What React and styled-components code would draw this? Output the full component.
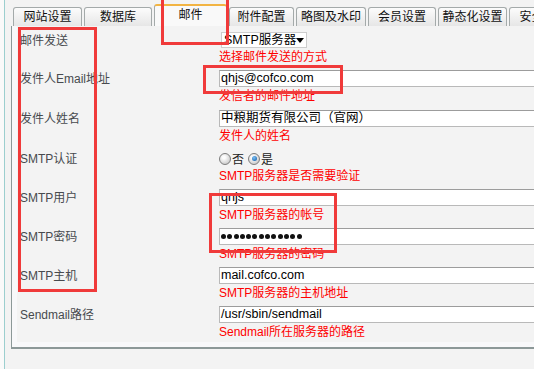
import React from 'react'
import styled, { createGlobalStyle } from 'styled-components'

const Global = createGlobalStyle`
  html, body { margin: 0; padding: 0; background: #fafafa; }
  body {
    font-family: "Liberation Sans", "Noto Sans CJK SC", sans-serif;
    font-size: 12px;
  }
`

const Page = styled.div`
  position: relative;
  width: 534px; height: 369px;
  overflow: hidden;
  padding-left: 4px;
  box-sizing: border-box;
  background: #fafafa;
`

const Frame = styled.div`
  width: 640px; height: 369px;
  border-left: 1px solid #9ccfcf;
  background: #f3f3f3;
  padding-left: 6px;
  box-sizing: border-box;
`

const TabBar = styled.div`
  display: flex;
  align-items: flex-end;
  gap: 2px;
  height: 26px;
  padding-left: 2px;
`

const Tab = styled.div`
  flex: none;
  width: ${p => p.$w}px;
  height: ${p => (p.$active ? 22 : 19)}px;
  box-sizing: border-box;
  border: 1px solid #a4aaaa;
  border-bottom: none;
  border-top: ${p => (p.$active ? '2px solid #f2b443' : '1px solid #a4aaaa')};
  border-radius: 3px 3px 0 0;
  background: ${p => (p.$active ? '#f9f9f9' : 'linear-gradient(#fcfcfc, #e6e6e6)')};
  color: #111;
  font-size: 12px;
  line-height: 18px;
  text-align: center;
  white-space: nowrap;
  overflow: hidden;
`

const Panel = styled.div`
  border-left: 1px solid #8c9898;
  border-bottom: 2px solid #8c9898;
  background: #f8f8fa;
  padding: 0 0 5px 5px;
`

const Form = styled.div`
  height: 316px;
  box-sizing: border-box;
  padding-top: 6px;
  overflow: hidden;
  background: #f3f3f3;
`

const Row = styled.div`
  display: grid;
  grid-template-columns: 202px 1fr;
  padding-bottom: ${p => (p.$loose ? 5 : 4)}px;
`

const Label = styled.div`
  padding: 1px 0 0 3px;
  line-height: 17px;
  color: #474a4e;
  white-space: nowrap;
`

const Cell = styled.div`
  display: flex;
  flex-direction: column;
  align-items: flex-start;
`

const TextBox = styled.div`
  width: 100%;
  height: 17px;
  box-sizing: border-box;
  border: 1px solid #b9b9b9;
  border-top-color: #9c9c9c;
  background: #fff;
  padding: 0 1px;
  color: #000;
  font-size: 12.5px;
  line-height: 15px;
  white-space: nowrap;
  display: flex;
  align-items: center;
`

const Dot = styled.span`
  flex: none;
  display: inline-block;
  width: 5px; height: 5px;
  border-radius: 50%;
  background: #111;
  margin-right: 1.3px;
`

const Select = styled.div`
  flex: none;
  margin-left: 2px;
  width: 86px;
  min-width: 86px;
  height: 16px;
  box-sizing: border-box;
  border: 1px solid #cdcdcd;
  background: #fff;
  display: flex;
  align-items: center;
  justify-content: space-between;
  padding: 0 4px 0 2px;
  color: #000;
  font-size: 12.5px;
  line-height: 14px;
  white-space: nowrap;
`

const Caret = styled.span`
  flex: none;
  width: 0; height: 0;
  border-left: 4px solid transparent;
  border-right: 4px solid transparent;
  border-top: 5px solid #000;
`

const Hint = styled.div`
  color: #ff0000;
  line-height: 18px;
  white-space: nowrap;
`

const RadioGroup = styled.div`
  height: 17px;
  display: flex;
  align-items: center;
  color: #222;
`

const Radio = styled.span`
  display: inline-block;
  position: relative;
  width: 12px; height: 12px;
  box-sizing: border-box;
  border-radius: 50%;
  border: 1px solid #7d7d7d;
  background: radial-gradient(circle at 40% 35%, #fdfdfd 15%, #bdbdbd 95%);
  margin: ${p => (p.$first ? '0 1px 0 0' : '0 1px 0 4px')};
  &::after {
    content: '';
    display: ${p => (p.$checked ? 'block' : 'none')};
    position: absolute;
    left: 2.5px; top: 2.5px;
    width: 5px; height: 5px;
    border-radius: 50%;
    background: radial-gradient(circle at 40% 35%, #7cc0f4, #0a56a4);
  }
`

const Mark = styled.div`
  position: absolute;
  left: ${p => p.$x}px;
  top: ${p => p.$y}px;
  width: ${p => p.$w}px;
  height: ${p => p.$h}px;
  box-sizing: border-box;
  border: 3px solid #f03a3a;
  pointer-events: none;
`

const tabs = [
  ['网站设置', 69],
  ['数据库', 68],
  ['邮件', 73, true],
  ['附件配置', 65],
  ['略图及水印', 70],
  ['会员设置', 68],
  ['静态化设置', 69],
  ['安全设置', 69],
]

const marks = [
  [161, -3, 68, 48],
  [18, 27, 79, 265],
  [203, 65, 140, 29],
  [209, 193, 128, 60],
]

const fields = [
  { label: '发件人Email地址', value: 'qhjs@cofco.com', hint: '发信者的邮件地址', loose: true },
  { label: '发件人姓名', value: '中粮期货有限公司（官网）', hint: '发件人的姓名', loose: true },
  { label: 'SMTP认证', radio: true, hint: 'SMTP服务器是否需要验证' },
  { label: 'SMTP用户', value: 'qnjs', hint: 'SMTP服务器的帐号' },
  { label: 'SMTP密码', password: 13, hint: 'SMTP服务器的密码' },
  { label: 'SMTP主机', value: 'mail.cofco.com', hint: 'SMTP服务器的主机地址' },
  { label: 'Sendmail路径', value: '/usr/sbin/sendmail', hint: 'Sendmail所在服务器的路径' },
]

function Field({ f }) {
  if (f.radio) {
    return (
      <RadioGroup>
        <Radio $first />否
        <Radio $checked />是
      </RadioGroup>
    )
  }
  if (f.password) {
    return (
      <TextBox>
        {Array.from({ length: f.password }).map((_, i) => <Dot key={i} />)}
      </TextBox>
    )
  }
  return <TextBox>{f.value}</TextBox>
}

export default function App() {
  return (
    <Page>
      <Global />
      <Frame>
        <TabBar>
          {tabs.map(([t, w, a]) => (
            <Tab key={t} $w={w} $active={a}>{t}</Tab>
          ))}
        </TabBar>
        <Panel>
          <Form>
            <Row>
              <Label>邮件发送</Label>
              <Cell>
                <Select>SMTP服务器<Caret /></Select>
                <Hint>选择邮件发送的方式</Hint>
              </Cell>
            </Row>
            {fields.map(f => (
              <Row key={f.label} $loose={f.loose}>
                <Label>{f.label}</Label>
                <Cell>
                  <Field f={f} />
                  <Hint>{f.hint}</Hint>
                </Cell>
              </Row>
            ))}
          </Form>
        </Panel>
      </Frame>
      {marks.map(([x, y, w, h], i) => (
        <Mark key={i} $x={x} $y={y} $w={w} $h={h} />
      ))}
    </Page>
  )
}
